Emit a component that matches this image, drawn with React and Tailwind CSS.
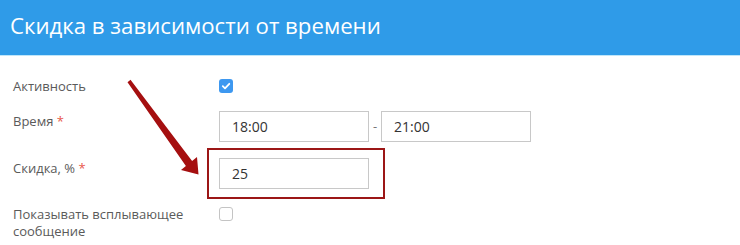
const CheckBox = ({ checked }) => (
  <div
    className={
      checked
        ? "w-[14px] h-[14px] rounded-[3px] bg-[#3d98f0] flex items-center justify-center"
        : "w-[14px] h-[14px] rounded-[3px] border border-[#c4c4c4] bg-white"
    }
  >
    {checked && (
      <svg width="10" height="10" viewBox="0 0 10 10">
        <path d="M1.8 5.2 L4 7.3 L8.3 2.8" fill="none" stroke="#fff" strokeWidth="1.8" strokeLinecap="round" strokeLinejoin="round" />
      </svg>
    )}
  </div>
);

const Input = ({ value }) => (
  <div className="w-[150px] h-[31px] border border-[#c8c8c8] bg-white flex items-center pl-[12px] text-[14px] text-[#333]">
    {value}
  </div>
);

const Req = () => <span className="text-[#e8584b]"> *</span>;

export default function App() {
  return (
    <div className="relative w-[740px] h-[245px] bg-white overflow-hidden font-['Open_Sans',sans-serif]">
      {/* Header */}
      <div className="h-[55px] bg-[#2f9be8] flex items-center pl-[10px] pb-[2px]">
        <h1 className="text-[22.2px] text-white leading-none">Скидка в зависимости от времени</h1>
      </div>
      <div className="h-[1px] bg-[#bfe6fa]" />

      {/* Form */}
      <div className="pl-[13px] pt-[21px] text-[13px] text-[#5a5a5a]">
        <div className="flex items-center h-[18px]">
          <div className="w-[206px] leading-[18px]">Активность</div>
          <CheckBox checked />
        </div>

        <div className="flex items-start mt-[16px]">
          <div className="w-[206px] leading-[18px] mt-[1px]">
            Время<Req />
          </div>
          <Input value="18:00" />
          <div className="w-[12px] text-center text-[#777] leading-[31px]">-</div>
          <Input value="21:00" />
        </div>

        <div className="flex items-start mt-[16px]">
          <div className="w-[206px] leading-[18px] mt-[1px]">
            Скидка, %<Req />
          </div>
          <div className="relative">
            <Input value="25" />
            <div className="absolute -left-[12px] -top-[10px] w-[178px] h-[51px] border-2 border-[#9c1616]" />
          </div>
        </div>

        <div className="flex items-start mt-[17px]">
          <div className="w-[206px] leading-[17px]">
            Показывать всплывающее
            <br />
            сообщение
          </div>
          <div className="mt-[1px]">
            <CheckBox />
          </div>
        </div>
      </div>

      {/* Arrow annotation */}
      <svg className="absolute left-0 top-0 pointer-events-none" width="740" height="245">
        <polygon
          points="130.5,79.8 192.1,161 197,157 198.5,174.5 181,170 185.9,166 127.5,82.2"
          fill="#a50f10"
        />
      </svg>
    </div>
  );
}
